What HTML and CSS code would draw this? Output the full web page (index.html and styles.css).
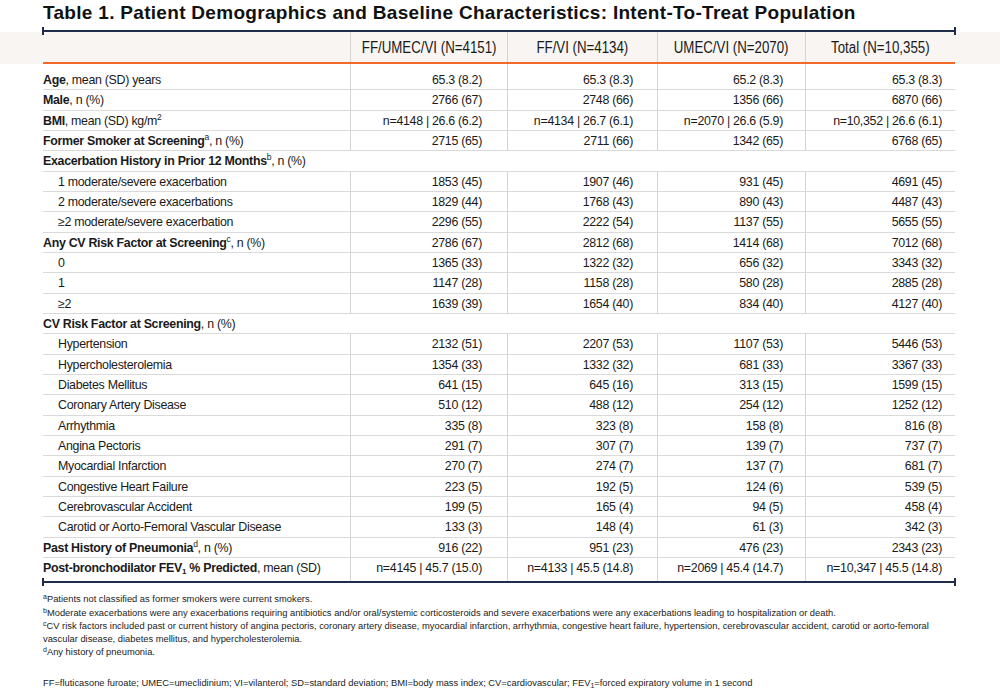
FILE: index.html
```html
<!DOCTYPE html>
<html>
<head>
<meta charset="utf-8">
<link rel="stylesheet" href="styles.css">
</head>
<body>
<h1 class="title">Table 1. Patient Demographics and Baseline Characteristics: Intent-To-Treat Population</h1>
<div class="rule rule-top"></div>
<div class="band">
  <div class="grid head">
    <div class="hc"></div>
    <div class="hc"><span>FF/UMEC/VI (N=4151)</span></div>
    <div class="hc"><span>FF/VI (N=4134)</span></div>
    <div class="hc"><span>UMEC/VI (N=2070)</span></div>
    <div class="hc"><span>Total (N=10,355)</span></div>
  </div>
</div>
<div class="body">
  <div class="grid row first"><div class="lab"><b>Age</b>, mean (SD) years</div><div class="v c1">65.3 (8.2)</div><div class="v c2">65.3 (8.3)</div><div class="v c3">65.2 (8.3)</div><div class="v c4">65.3 (8.3)</div></div>
  <div class="grid row"><div class="lab"><b>Male</b>, n (%)</div><div class="v c1">2766 (67)</div><div class="v c2">2748 (66)</div><div class="v c3">1356 (66)</div><div class="v c4">6870 (66)</div></div>
  <div class="grid row"><div class="lab"><b>BMI</b>, mean (SD) kg/m<sup>2</sup></div><div class="v c1">n=4148 | 26.6 (6.2)</div><div class="v c2">n=4134 | 26.7 (6.1)</div><div class="v c3">n=2070 | 26.6 (5.9)</div><div class="v c4">n=10,352 | 26.6 (6.1)</div></div>
  <div class="grid row"><div class="lab"><b>Former Smoker at Screening</b><sup>a</sup>, n (%)</div><div class="v c1">2715 (65)</div><div class="v c2">2711 (66)</div><div class="v c3">1342 (65)</div><div class="v c4">6768 (65)</div></div>
  <div class="row section"><div class="lab"><b>Exacerbation History in Prior 12 Months</b><sup>b</sup>, n (%)</div></div>
  <div class="grid row"><div class="lab ind">1 moderate/severe exacerbation</div><div class="v c1">1853 (45)</div><div class="v c2">1907 (46)</div><div class="v c3">931 (45)</div><div class="v c4">4691 (45)</div></div>
  <div class="grid row"><div class="lab ind">2 moderate/severe exacerbations</div><div class="v c1">1829 (44)</div><div class="v c2">1768 (43)</div><div class="v c3">890 (43)</div><div class="v c4">4487 (43)</div></div>
  <div class="grid row"><div class="lab ind">≥2 moderate/severe exacerbation</div><div class="v c1">2296 (55)</div><div class="v c2">2222 (54)</div><div class="v c3">1137 (55)</div><div class="v c4">5655 (55)</div></div>
  <div class="grid row"><div class="lab"><b>Any CV Risk Factor at Screening</b><sup>c</sup>, n (%)</div><div class="v c1">2786 (67)</div><div class="v c2">2812 (68)</div><div class="v c3">1414 (68)</div><div class="v c4">7012 (68)</div></div>
  <div class="grid row"><div class="lab ind">0</div><div class="v c1">1365 (33)</div><div class="v c2">1322 (32)</div><div class="v c3">656 (32)</div><div class="v c4">3343 (32)</div></div>
  <div class="grid row"><div class="lab ind">1</div><div class="v c1">1147 (28)</div><div class="v c2">1158 (28)</div><div class="v c3">580 (28)</div><div class="v c4">2885 (28)</div></div>
  <div class="grid row"><div class="lab ind">≥2</div><div class="v c1">1639 (39)</div><div class="v c2">1654 (40)</div><div class="v c3">834 (40)</div><div class="v c4">4127 (40)</div></div>
  <div class="row section"><div class="lab"><b>CV Risk Factor at Screening</b>, n (%)</div></div>
  <div class="grid row"><div class="lab ind">Hypertension</div><div class="v c1">2132 (51)</div><div class="v c2">2207 (53)</div><div class="v c3">1107 (53)</div><div class="v c4">5446 (53)</div></div>
  <div class="grid row"><div class="lab ind">Hypercholesterolemia</div><div class="v c1">1354 (33)</div><div class="v c2">1332 (32)</div><div class="v c3">681 (33)</div><div class="v c4">3367 (33)</div></div>
  <div class="grid row"><div class="lab ind">Diabetes Mellitus</div><div class="v c1">641 (15)</div><div class="v c2">645 (16)</div><div class="v c3">313 (15)</div><div class="v c4">1599 (15)</div></div>
  <div class="grid row"><div class="lab ind">Coronary Artery Disease</div><div class="v c1">510 (12)</div><div class="v c2">488 (12)</div><div class="v c3">254 (12)</div><div class="v c4">1252 (12)</div></div>
  <div class="grid row"><div class="lab ind">Arrhythmia</div><div class="v c1">335 (8)</div><div class="v c2">323 (8)</div><div class="v c3">158 (8)</div><div class="v c4">816 (8)</div></div>
  <div class="grid row"><div class="lab ind">Angina Pectoris</div><div class="v c1">291 (7)</div><div class="v c2">307 (7)</div><div class="v c3">139 (7)</div><div class="v c4">737 (7)</div></div>
  <div class="grid row"><div class="lab ind">Myocardial Infarction</div><div class="v c1">270 (7)</div><div class="v c2">274 (7)</div><div class="v c3">137 (7)</div><div class="v c4">681 (7)</div></div>
  <div class="grid row"><div class="lab ind">Congestive Heart Failure</div><div class="v c1">223 (5)</div><div class="v c2">192 (5)</div><div class="v c3">124 (6)</div><div class="v c4">539 (5)</div></div>
  <div class="grid row"><div class="lab ind">Cerebrovascular Accident</div><div class="v c1">199 (5)</div><div class="v c2">165 (4)</div><div class="v c3">94 (5)</div><div class="v c4">458 (4)</div></div>
  <div class="grid row"><div class="lab ind">Carotid or Aorto-Femoral Vascular Disease</div><div class="v c1">133 (3)</div><div class="v c2">148 (4)</div><div class="v c3">61 (3)</div><div class="v c4">342 (3)</div></div>
  <div class="grid row"><div class="lab"><b>Past History of Pneumonia</b><sup>d</sup>, n (%)</div><div class="v c1">916 (22)</div><div class="v c2">951 (23)</div><div class="v c3">476 (23)</div><div class="v c4">2343 (23)</div></div>
  <div class="grid row last"><div class="lab"><b>Post-bronchodilator FEV<sub>1</sub> % Predicted</b>, mean (SD)</div><div class="v c1">n=4145 | 45.7 (15.0)</div><div class="v c2">n=4133 | 45.5 (14.8)</div><div class="v c3">n=2069 | 45.4 (14.7)</div><div class="v c4">n=10,347 | 45.5 (14.8)</div></div>
</div>
<div class="rule rule-bottom"></div>
<div class="notes">
  <p><sup>a</sup>Patients not classified as former smokers were current smokers.</p>
  <p><sup>b</sup>Moderate exacerbations were any exacerbations requiring antibiotics and/or oral/systemic corticosteroids and severe exacerbations were any exacerbations leading to hospitalization or death.</p>
  <p><sup>c</sup>CV risk factors included past or current history of angina pectoris, coronary artery disease, myocardial infarction, arrhythmia, congestive heart failure, hypertension, cerebrovascular accident, carotid or aorto-femoral<br>vascular disease, diabetes mellitus, and hypercholesterolemia.</p>
  <p><sup>d</sup>Any history of pneumonia.</p>
  <p class="abbr">FF=fluticasone furoate; UMEC=umeclidinium; VI=vilanterol; SD=standard deviation; BMI=body mass index; CV=cardiovascular; FEV<sub>1</sub>=forced expiratory volume in 1 second</p>
</div>
</body>
</html>
```
FILE: styles.css
```css
* { box-sizing: border-box; }
body {
  margin: 0;
  width: 1000px;
  height: 695px;
  overflow: hidden;
  background: #ffffff;
  color: #1a1a1a;
  font-family: "Liberation Sans", Arial, sans-serif;
}
.title {
  margin: 0;
  height: 30px;
  padding: 2px 0 0 43px;
  font-size: 19px;
  line-height: 21px;
  font-weight: bold;
  color: #111;
  letter-spacing: 0.3px;
}
.rule {
  position: relative;
  margin-left: 42px;
  width: 914px;
  height: 2px;
  background: #1f2c4c;
}
.rule::before, .rule::after {
  content: "";
  position: absolute;
  top: -3px;
  width: 2px;
  height: 8px;
  background: #1f2c4c;
}
.rule::before { left: 0; }
.rule::after { right: 0; }
.band {
  background: #f8f5f2;
  height: 32px;
}
.grid {
  display: grid;
  grid-template-columns: 307px 157px 150px 148px 150px;
  margin-left: 43px;
  width: 912px;
}
.head {
  height: 32px;
  border-bottom: 2px solid #f26a2a;
}
.hc {
  display: flex;
  align-items: center;
  justify-content: center;
  font-size: 16px;
  color: #1a1a1a;
  border-left: 1px solid #d4d4d4;
  padding-top: 1px;
  white-space: nowrap;
}
.hc span {
  display: inline-block;
  transform: scaleX(0.83);
}
.hc:first-child { border-left: none; }
.row {
  height: 20.33px;
  border-bottom: 1px solid #dadada;
  font-size: 12.4px;
  letter-spacing: -0.3px;
  line-height: 19px;
}
.row.first {
  height: 26.33px;
}
.row.first > div { padding-top: 7px; }
.row.section {
  margin-left: 43px;
  width: 912px;
}
.row.last {
  border-bottom: none;
  height: 23.33px;
}
.lab {
  white-space: nowrap;
  padding-top: 1px;
}
.lab.ind { padding-left: 15px; }
.v {
  text-align: right;
  border-left: 1px solid #d4d4d4;
  white-space: nowrap;
  padding-top: 1px;
}
.c1 { padding-right: 25px; }
.c2 { padding-right: 24px; }
.c3 { padding-right: 22px; }
.c4 { padding-right: 13px; }
sup {
  font-size: 8.5px;
  line-height: 0;
  vertical-align: 5px;
}
sub {
  font-size: 8px;
  line-height: 0;
  vertical-align: -2px;
}
.notes {
  margin-left: 43px;
  padding-top: 10px;
  font-size: 9.35px;
  line-height: 13.3px;
  color: #222;
}
.notes p { margin: 0; }
.notes sup { font-size: 7px; vertical-align: 3px; }
.notes sub { font-size: 7px; }
.notes .abbr { margin-top: 17px; }
```
